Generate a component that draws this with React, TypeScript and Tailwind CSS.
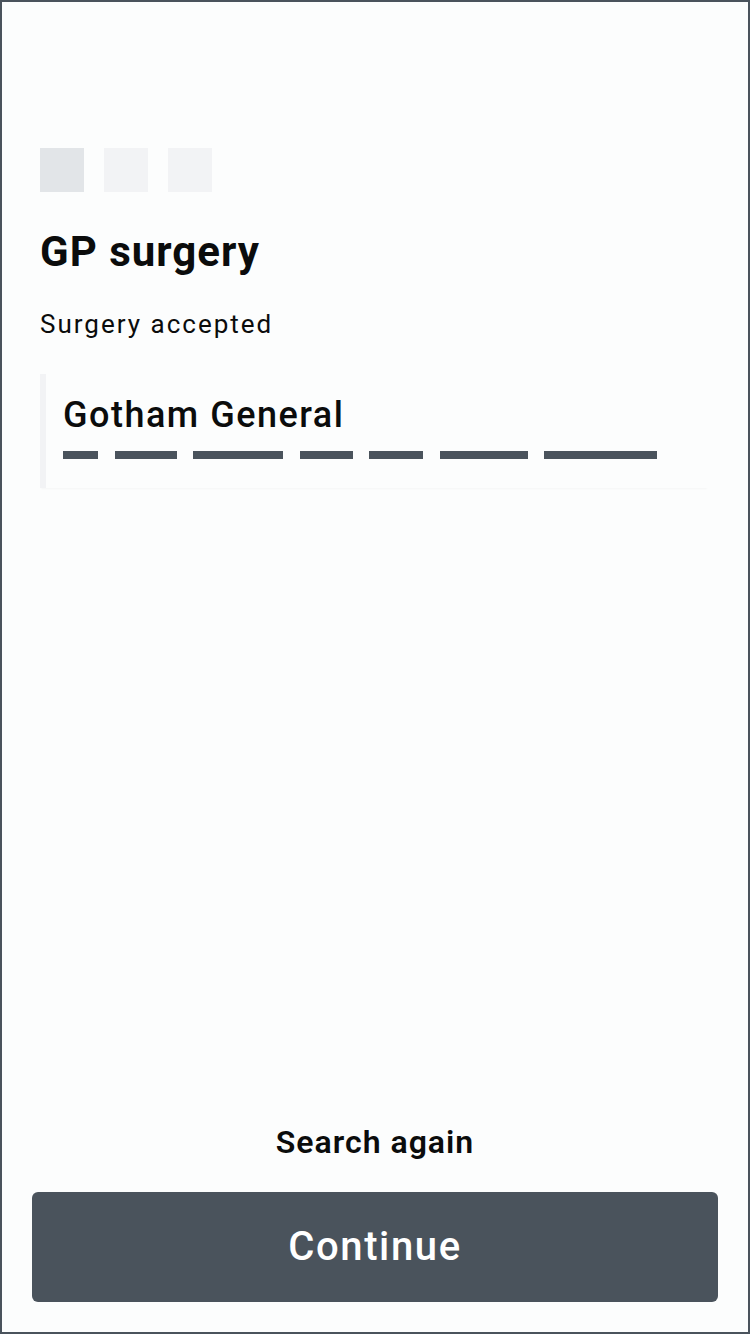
const dashes = [35, 62, 90, 53, 54, 88, 113];

export default function App() {
  return (
    <div
      className="flex h-[1334px] w-[750px] flex-col border-2 border-[#4a535c] bg-[#fcfdfd] text-[#0b0c0c]"
      style={{ fontFamily: "Roboto, 'Liberation Sans', sans-serif" }}
    >
      <div className="px-[38px] pt-[146px]">
        <div className="flex gap-5">
          <span className="h-11 w-11 bg-[#e2e5e8]" />
          <span className="h-11 w-11 bg-[#f2f3f5]" />
          <span className="h-11 w-11 bg-[#f2f3f5]" />
        </div>
        <h1 className="mt-[36px] text-[42px] font-bold leading-[48px] tracking-[1px]">
          GP surgery
        </h1>
        <p className="mt-[33px] text-[26px] leading-[30px] tracking-[2px]">
          Surgery accepted
        </p>
        <div className="mt-[35px] flex h-[114px] w-[668px] border-l-[6px] border-[#f2f3f5] shadow-[0_2px_2px_-1px_rgba(0,0,0,0.03)]">
          <div className="pl-[17px] pt-[20px]">
            <div className="text-[36px] font-medium leading-[42px] tracking-[1.5px]">
              Gotham General
            </div>
            <div className="mt-[15px] flex gap-[16.5px]">
              {dashes.map((w, i) => (
                <span
                  key={i}
                  className="h-2 bg-[#4a535c]"
                  style={{ width: w }}
                />
              ))}
            </div>
          </div>
        </div>
      </div>
      <div className="flex-1" />
      <div className="px-[30px] pb-[30px]">
        <div className="text-center text-[32px] font-semibold leading-[38px] tracking-[1px]">
          Search again
        </div>
        <button className="mt-[31px] flex h-[110px] w-full items-center justify-center rounded-md bg-[#4a535c] text-[40px] font-medium leading-none tracking-[1.6px] text-white">
          Continue
        </button>
      </div>
    </div>
  );
}
